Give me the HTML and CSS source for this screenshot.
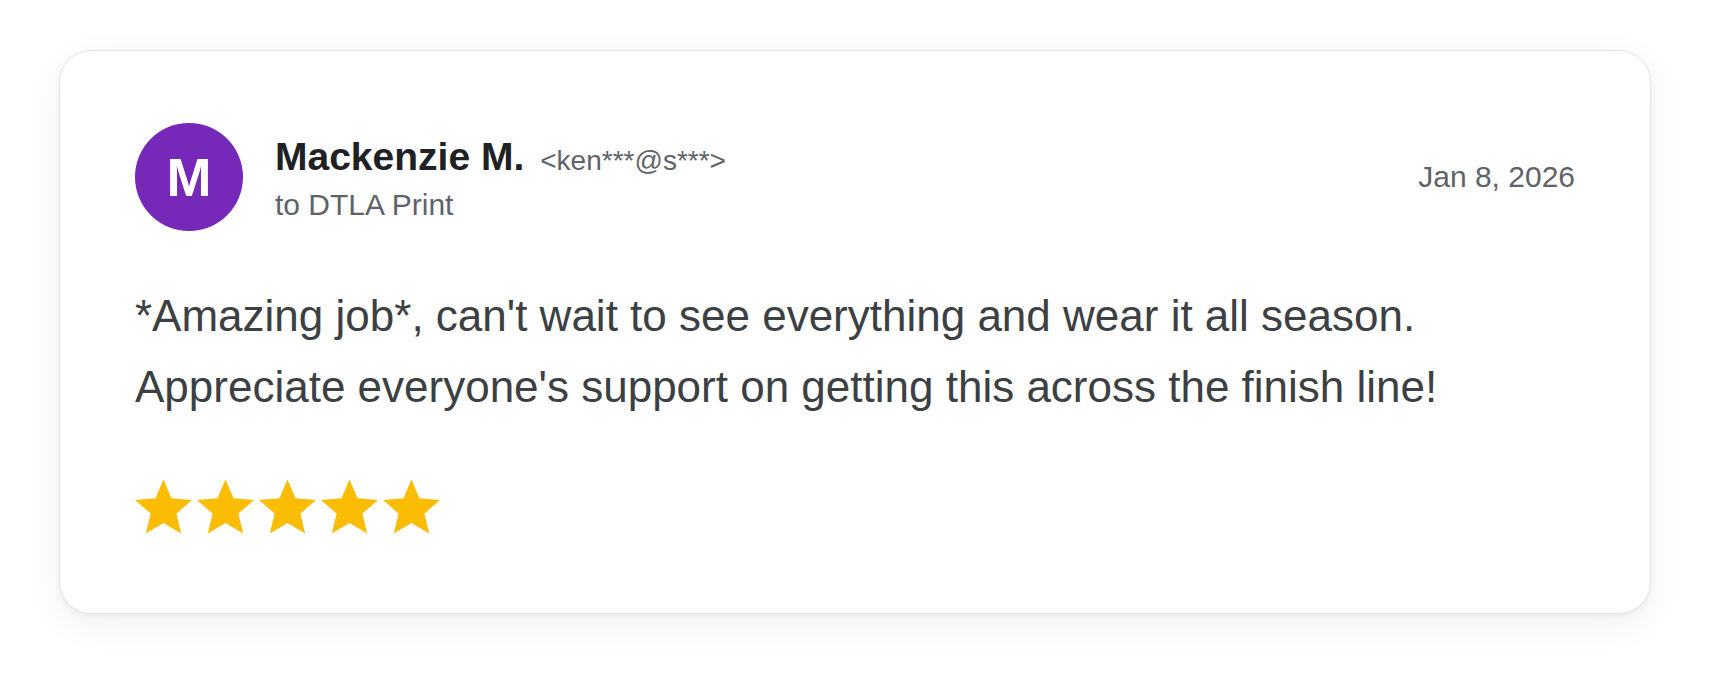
FILE: index.html
```html
<!DOCTYPE html>
<html lang="en">
<head>
<meta charset="utf-8">
<title>Review</title>
<link rel="stylesheet" href="styles.css">
</head>
<body>
<div class="page">
  <article class="card">
    <header class="head">
      <div class="avatar">M</div>
      <div class="who">
        <div class="name-row"><span class="name">Mackenzie M.</span><span class="email">&lt;ken***@s***&gt;</span></div>
        <div class="to">to DTLA Print</div>
      </div>
      <div class="date">Jan 8, 2026</div>
    </header>
    <p class="body">*Amazing job*, can't wait to see everything and wear it all season.<br>Appreciate everyone's support on getting this across the finish line!</p>
    <div class="stars">
      <svg class="star" viewBox="2 2 20 19"><path d="M12 17.27L18.18 21l-1.64-7.03L22 9.24l-7.19-.61L12 2 9.19 8.63 2 9.24l5.46 4.73L5.82 21z"/></svg>
      <svg class="star" viewBox="2 2 20 19"><path d="M12 17.27L18.18 21l-1.64-7.03L22 9.24l-7.19-.61L12 2 9.19 8.63 2 9.24l5.46 4.73L5.82 21z"/></svg>
      <svg class="star" viewBox="2 2 20 19"><path d="M12 17.27L18.18 21l-1.64-7.03L22 9.24l-7.19-.61L12 2 9.19 8.63 2 9.24l5.46 4.73L5.82 21z"/></svg>
      <svg class="star" viewBox="2 2 20 19"><path d="M12 17.27L18.18 21l-1.64-7.03L22 9.24l-7.19-.61L12 2 9.19 8.63 2 9.24l5.46 4.73L5.82 21z"/></svg>
      <svg class="star" viewBox="2 2 20 19"><path d="M12 17.27L18.18 21l-1.64-7.03L22 9.24l-7.19-.61L12 2 9.19 8.63 2 9.24l5.46 4.73L5.82 21z"/></svg>
    </div>
  </article>
</div>
</body>
</html>
```
FILE: styles.css
```css
html, body {
  margin: 0;
  padding: 0;
  background: #ffffff;
  font-family: "Liberation Sans", Arial, Helvetica, sans-serif;
}
.page {
  padding: 50px 0 67px 59px;
}
.card {
  box-sizing: border-box;
  width: 1592px;
  height: 564px;
  background: #fff;
  border: 1px solid #e1e4e9;
  border-radius: 32px;
  box-shadow: 0 3px 5px rgba(30, 40, 60, 0.05), 0 10px 36px rgba(30, 40, 60, 0.06);
  padding: 72px 75px 0 75px;
}
.head {
  display: flex;
  align-items: flex-start;
}
.avatar {
  width: 108px;
  height: 108px;
  border-radius: 50%;
  background: #7628b8;
  color: #fff;
  font-weight: 700;
  font-size: 54px;
  display: flex;
  align-items: center;
  justify-content: center;
  flex-shrink: 0;
}
.who {
  margin-left: 32px;
  margin-top: 11px;
  flex: 1;
}
.name-row {
  display: flex;
  align-items: baseline;
  gap: 16px;
  line-height: 46px;
}
.name {
  font-size: 39px;
  font-weight: 700;
  color: #202124;
}
.email {
  font-size: 28px;
  color: #5f6368;
}
.to {
  margin-top: 3px;
  font-size: 30px;
  line-height: 36px;
  color: #5f6368;
}
.date {
  align-self: center;
  font-size: 30px;
  line-height: 36px;
  color: #5f6368;
}
.body {
  margin: 49px 0 0 0;
  font-size: 44px;
  line-height: 71px;
  color: #3c4043;
}
.stars {
  display: flex;
  gap: 5px;
  margin-top: 57px;
}
.star {
  width: 57px;
  height: 55px;
  fill: #fbbc04;
}
```
